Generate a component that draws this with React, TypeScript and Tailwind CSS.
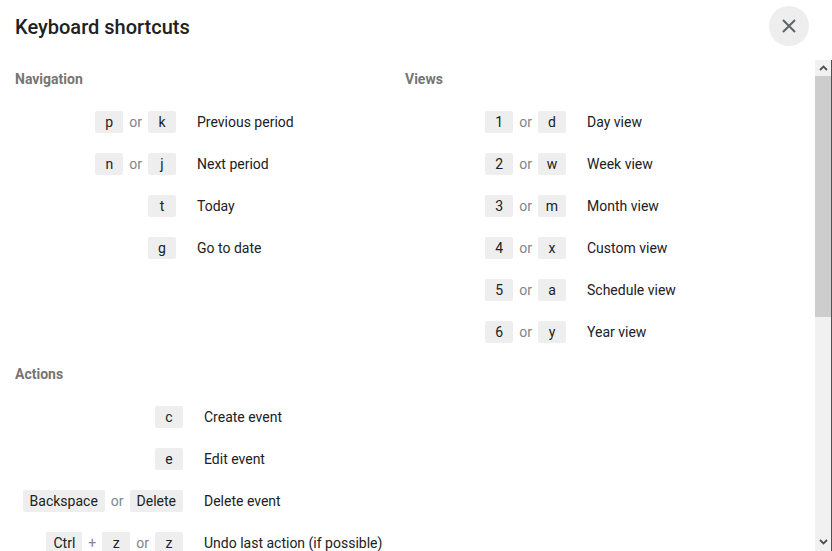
import React from "react";

type Keys = (string | { sep: string })[];

interface Shortcut {
  keys: Keys;
  label: string;
}

const navigation: Shortcut[] = [
  { keys: ["p", { sep: "or" }, "k"], label: "Previous period" },
  { keys: ["n", { sep: "or" }, "j"], label: "Next period" },
  { keys: ["t"], label: "Today" },
  { keys: ["g"], label: "Go to date" },
];

const views: Shortcut[] = [
  { keys: ["1", { sep: "or" }, "d"], label: "Day view" },
  { keys: ["2", { sep: "or" }, "w"], label: "Week view" },
  { keys: ["3", { sep: "or" }, "m"], label: "Month view" },
  { keys: ["4", { sep: "or" }, "x"], label: "Custom view" },
  { keys: ["5", { sep: "or" }, "a"], label: "Schedule view" },
  { keys: ["6", { sep: "or" }, "y"], label: "Year view" },
];

const actions: Shortcut[] = [
  { keys: ["c"], label: "Create event" },
  { keys: ["e"], label: "Edit event" },
  { keys: ["Backspace", { sep: "or" }, "Delete"], label: "Delete event" },
  {
    keys: ["Ctrl", { sep: "+" }, "z", { sep: "or" }, "z"],
    label: "Undo last action (if possible)",
  },
];

const Row: React.FC<{ item: Shortcut; keyWidth: string }> = ({
  item,
  keyWidth,
}) => (
  <div className="flex h-[42px] items-center">
    <div className={`flex shrink-0 items-center justify-end ${keyWidth}`}>
      {item.keys.map((k, i) =>
        typeof k === "string" ? (
          <span
            key={i}
            className="h-[22px] min-w-[28px] rounded-[2px] bg-[#eeeeee] px-[7px] text-center text-[14px] leading-[22px] text-[#202124]"
          >
            {k}
          </span>
        ) : (
          <span key={i} className="mx-[6px] text-[14px] text-[#80868b]">
            {k.sep}
          </span>
        )
      )}
    </div>
    <div className="ml-[21px] text-[14px] text-[#202124]">{item.label}</div>
  </div>
);

const Section: React.FC<{
  title: string;
  items: Shortcut[];
  keyWidth: string;
}> = ({ title, items, keyWidth }) => (
  <section>
    <h2 className="mb-3 text-[14px] leading-[20px] font-bold text-[#757575]">
      {title}
    </h2>
    {items.map((item) => (
      <Row key={item.label} item={item} keyWidth={keyWidth} />
    ))}
  </section>
);

const Scrollbar: React.FC = () => (
  <div className="flex w-[17px] shrink-0 flex-col border-r border-[#505050] bg-[#f1f1f1]">
    <div className="flex h-[16px] items-center justify-center">
      <svg width="9" height="6" viewBox="0 0 9 6">
        <path d="M1 5 L4.5 1.5 L8 5" stroke="#505050" strokeWidth="1.8" fill="none" />
      </svg>
    </div>
    <div className="h-[241px] bg-[#cdcdcd]" />
    <div className="flex-1" />
    <div className="flex h-[19px] items-center justify-center">
      <svg width="9" height="6" viewBox="0 0 9 6">
        <path d="M1 1 L4.5 4.5 L8 1" stroke="#505050" strokeWidth="1.8" fill="none" />
      </svg>
    </div>
  </div>
);

export default function App() {
  return (
    <div className="flex h-[551px] w-[832px] flex-col overflow-hidden bg-white font-['Roboto',sans-serif]">
      <header className="flex h-[60px] shrink-0 items-start justify-between pt-[6px] pr-[23px] pl-[15px]">
        <h1 className="mt-[7px] text-[20px] leading-[28px] font-medium text-[#202124]">
          Keyboard shortcuts
        </h1>
        <button className="flex h-[40px] w-[40px] items-center justify-center rounded-full bg-[#eeeeee]">
          <svg width="14" height="14" viewBox="0 0 14 14">
            <path d="M1 1 L13 13 M13 1 L1 13" stroke="#5f6368" strokeWidth="2" />
          </svg>
        </button>
      </header>
      <div className="flex min-h-0 flex-1">
        <main className="min-w-0 flex-1 overflow-hidden pt-[9px] pl-[15px]">
          <div className="grid grid-cols-[390px_390px]">
            <Section title="Navigation" items={navigation} keyWidth="w-[161px]" />
            <Section title="Views" items={views} keyWidth="w-[161px]" />
          </div>
          <div className="mt-[11px]">
            <Section title="Actions" items={actions} keyWidth="w-[168px]" />
          </div>
        </main>
        <Scrollbar />
      </div>
    </div>
  );
}
